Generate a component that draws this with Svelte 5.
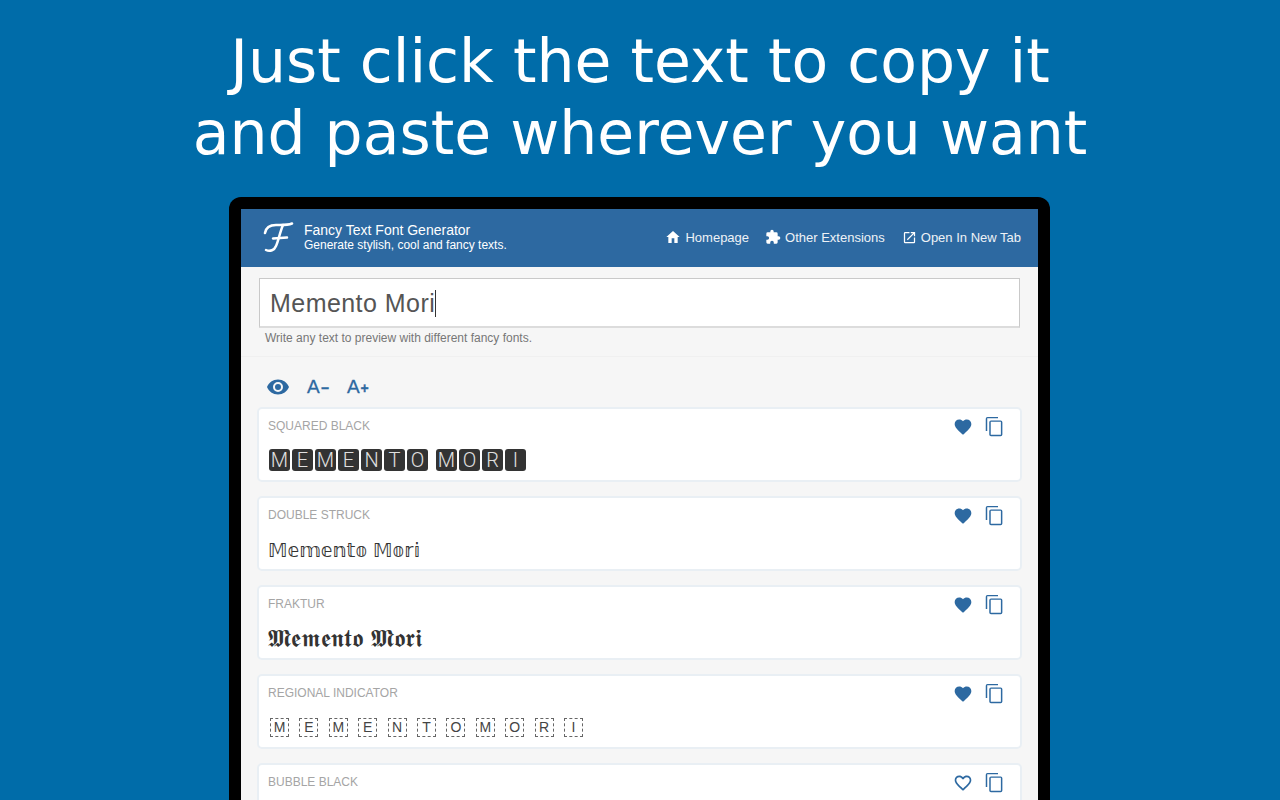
<script>
  let cards = [
    { name: 'SQUARED BLACK', kind: 'squared', liked: true },
    { name: 'DOUBLE STRUCK', kind: 'double', text: '𝕄𝕖𝕞𝕖𝕟𝕥𝕠 𝕄𝕠𝕣𝕚', liked: true },
    { name: 'FRAKTUR', kind: 'fraktur', text: '𝕸𝖊𝖒𝖊𝖓𝖙𝖔 𝕸𝖔𝖗𝖎', liked: true },
    { name: 'REGIONAL INDICATOR', kind: 'regional', liked: true },
    { name: 'BUBBLE BLACK', kind: 'bubble', liked: false }
  ];
  const squared = ['M', 'E', 'M', 'E', 'N', 'T', 'O', ' ', 'M', 'O', 'R', 'I'];
  const regional = ['M', 'E', 'M', 'E', 'N', 'T', 'O', 'M', 'O', 'R', 'I'];
</script>

<main>
  <h1>Just click the text to copy it<br />and paste wherever you want</h1>

  <div class="frame">
    <div class="app">
      <header>
        <div class="brand">
          <svg class="logo" width="32" height="32" viewBox="0 0 32 32" fill="none" stroke="#fff" stroke-width="2.5" stroke-linecap="round">
            <path d="M2 11C3 5 8 3 13 3s11 .5 16-1.500" />
            <path d="M20 3c-3 7-5 17-7 21-1.500 4-6 6-10 4" />
            <path d="M10 16.500l14-1" />
          </svg>
          <div class="titles">
            <strong>Fancy Text Font Generator</strong>
            <span>Generate stylish, cool and fancy texts.</span>
          </div>
        </div>
        <nav>
          <a href="#home">
            <svg width="16" height="16" viewBox="0 0 24 24" fill="#fff"><path d="M10 21v-7h4v7h5v-9h3L12 3 2 12h3v9z" /></svg>
            Homepage
          </a>
          <a href="#ext">
            <svg width="16" height="16" viewBox="0 0 24 24" fill="#fff"><path d="M20.500 11H19V7a2 2 0 0 0-2-2h-4V3.500a2.500 2.500 0 0 0-5 0V5H4a2 2 0 0 0-2 2v3.800h1.500a2.700 2.700 0 0 1 0 5.400H2V20a2 2 0 0 0 2 2h3.800v-1.500a2.700 2.700 0 0 1 5.400 0V22H17a2 2 0 0 0 2-2v-4h1.500a2.500 2.500 0 0 0 0-5z" /></svg>
            Other Extensions
          </a>
          <a class="tab" href="#tab">
            <svg width="15" height="15" viewBox="0 0 24 24" fill="#fff"><path d="M19 19H5V5h7V3H5a2 2 0 0 0-2 2v14a2 2 0 0 0 2 2h14a2 2 0 0 0 2-2v-7h-2zM14 3v2h3.600l-9.800 9.800 1.400 1.400L19 6.400V10h2V3z" /></svg>
            Open In New Tab
          </a>
        </nav>
      </header>

      <section class="entry">
        <div class="input">Memento Mori<i class="caret"></i></div>
        <p>Write any text to preview with different fancy fonts.</p>
      </section>

      <section class="list">
        <div class="tools">
          <svg width="24" height="24" viewBox="0 0 24 24" fill="#2d69a1"><path d="M12 4.500C7 4.500 2.700 7.600 1 12c1.700 4.400 6 7.500 11 7.500s9.300-3.100 11-7.500c-1.700-4.400-6-7.500-11-7.500zM12 17a5 5 0 1 1 0-10 5 5 0 0 1 0 10zm0-8a3 3 0 1 0 0 6 3 3 0 0 0 0-6z" /></svg>
          <span class="size">A<small>−</small></span>
          <span class="size">A<small>+</small></span>
        </div>

        {#each cards as card}
          <article>
            <div class="top">
              <span class="name">{card.name}</span>
              <div class="actions">
                {#if card.liked}
                  <svg width="20" height="20" viewBox="0 0 24 24" fill="#2d69a1"><path d="M12 21.400l-1.500-1.300C5.400 15.400 2 12.300 2 8.500 2 5.400 4.400 3 7.500 3c1.700 0 3.400.8 4.500 2.100C13.100 3.800 14.800 3 16.500 3 19.600 3 22 5.400 22 8.500c0 3.800-3.400 6.900-8.500 11.600z" /></svg>
                {:else}
                  <svg width="20" height="20" viewBox="0 0 24 24" fill="#2d69a1"><path d="M16.500 3c-1.700 0-3.400.8-4.500 2.100C10.900 3.800 9.200 3 7.500 3 4.400 3 2 5.400 2 8.500c0 3.800 3.400 6.900 8.500 11.600l1.500 1.300 1.500-1.300C18.600 15.400 22 12.300 22 8.500 22 5.400 19.600 3 16.500 3zm-4.400 15.600l-.1.100-.1-.1C7.100 14.200 4 11.400 4 8.500 4 6.500 5.500 5 7.500 5c1.500 0 3 1 3.600 2.400h1.900C13.500 6 15 5 16.500 5c2 0 3.500 1.500 3.500 3.500 0 2.900-3.100 5.700-7.900 10.100z" /></svg>
                {/if}
                <svg width="21" height="21" viewBox="0 0 24 24" fill="#2d69a1"><path d="M16 1H4a2 2 0 0 0-2 2v14h1.700V2.700H16zm3 4H8a2 2 0 0 0-2 2v14a2 2 0 0 0 2 2h11a2 2 0 0 0 2-2V7a2 2 0 0 0-2-2zm.3 16.300H7.700V6.700h11.600z" /></svg>
              </div>
            </div>
            {#if card.kind === 'squared'}
              <div class="value squared">
                {#each squared as c}
                  {#if c === ' '}<span class="gap"></span>{:else}<b>{c}</b>{/if}
                {/each}
              </div>
            {:else if card.kind === 'regional'}
              <div class="value regional">
                {#each regional as c}<b>{c}</b>{/each}
              </div>
            {:else if card.kind === 'double' || card.kind === 'fraktur'}
              <div class="value {card.kind}">{card.text}</div>
            {/if}
          </article>
        {/each}
      </section>
    </div>
  </div>
</main>

<style>
  :global(body) {
    margin: 0;
    background: #006ca9;
    overflow: hidden;
  }

  main {
    height: 800px;
    overflow: hidden;
    display: flex;
    flex-direction: column;
    align-items: center;
  }

  h1 {
    flex: none;
    margin: 25px 0 0;
    height: 172px;
    font: 400 60px/72px "DejaVu Sans", sans-serif;
    color: #fff;
    text-align: center;
  }

  .frame {
    width: 797px;
    flex: none;
    height: 640px;
    padding: 12px 12px 0;
    margin-right: 1px;
    background: #000;
    border-radius: 12px 12px 0 0;
  }

  .app {
    background: #f6f6f6;
    font-family: "Liberation Sans", Arial, sans-serif;
    height: 100%;
  }

  header {
    height: 58px;
    background: #2d69a1;
    color: #fff;
    display: flex;
    align-items: center;
    justify-content: space-between;
    padding: 0 17px 0 22px;
  }

  .brand {
    display: flex;
    align-items: center;
    gap: 9px;
  }

  .titles {
    display: flex;
    flex-direction: column;
    line-height: 15px;
    font-size: 12px;
  }

  .titles strong {
    font-weight: 400;
    font-size: 14px;
  }

  nav {
    display: flex;
    gap: 16px;
    padding-bottom: 2px;
  }

  nav a {
    display: flex;
    align-items: center;
    gap: 4px;
    color: #eef2f6;
    font-size: 13px;
    text-decoration: none;
  }

  nav .tab {
    margin-left: 1px;
  }

  .entry {
    height: 90px;
    padding: 11px 18px 0;
    box-sizing: border-box;
    border-bottom: 1px solid #f0f0f0;
  }

  .input {
    height: 50px;
    box-sizing: border-box;
    background: #fff;
    border: 1px solid #c9c9c9;
    border-bottom: 2px solid #dcdcdc;
    padding: 1px 10px 0;
    display: flex;
    align-items: center;
    font-size: 25px;
    letter-spacing: 0.45px;
    color: #555;
  }

  .caret {
    width: 1px;
    height: 27px;
    background: #333;
  }

  .entry p {
    margin: 3px 0 0 6px;
    font-size: 12px;
    line-height: 14px;
    color: #777;
  }

  .list {
    padding: 0 16px;
  }

  .tools {
    height: 50px;
    display: flex;
    align-items: center;
    gap: 17px;
    padding: 10px 0 0 9px;
    box-sizing: border-box;
    color: #2d69a1;
  }

  .size {
    font-size: 19px;
    -webkit-text-stroke: 0.3px #2d69a1;
  }

  .size + .size {
    margin-left: 1px;
  }

  .size small {
    font-size: 14px;
    font-weight: 700;
    margin-left: 1px;
  }

  article {
    box-sizing: border-box;
    height: 75px;
    margin-bottom: 14px;
    background: #fff;
    border: 2px solid #e9eff4;
    border-radius: 5px;
    padding: 0 9px;
  }

  .top {
    display: flex;
    justify-content: space-between;
    align-items: center;
    height: 35px;
  }

  .name {
    font-size: 12px;
    color: #a5a5a5;
    padding-bottom: 1px;
  }

  .actions {
    display: flex;
    align-items: center;
    gap: 11px;
    padding-right: 6px;
  }

  .value {
    color: #333;
    margin-top: 5px;
  }

  .squared {
    display: flex;
    gap: 2px;
    padding-left: 1px;
  }

  .squared b {
    width: 21px;
    height: 22px;
    background: #333;
    border-radius: 3px;
    color: #e0e0e0;
    font: 300 20px/22px Roboto, "Liberation Sans", sans-serif;
    text-align: center;
  }

  .squared .gap {
    width: 4px;
  }

  .double,
  .fraktur {
    line-height: 26px;
    margin-top: 4px;
    font-family: "DejaVu Sans", "DejaVu Serif", serif;
  }

  .double {
    font-size: 19px;
  }

  .fraktur {
    font-size: 24.500px;
  }

  .regional {
    display: flex;
    gap: 10.4px;
    padding-left: 2px;
    margin-top: 7px;
  }

  .regional b {
    width: 19px;
    height: 19px;
    box-sizing: border-box;
    border: 1px dashed #666;
    font: 400 14px/17px "Liberation Sans", sans-serif;
    text-align: center;
    color: #444;
  }
</style>
